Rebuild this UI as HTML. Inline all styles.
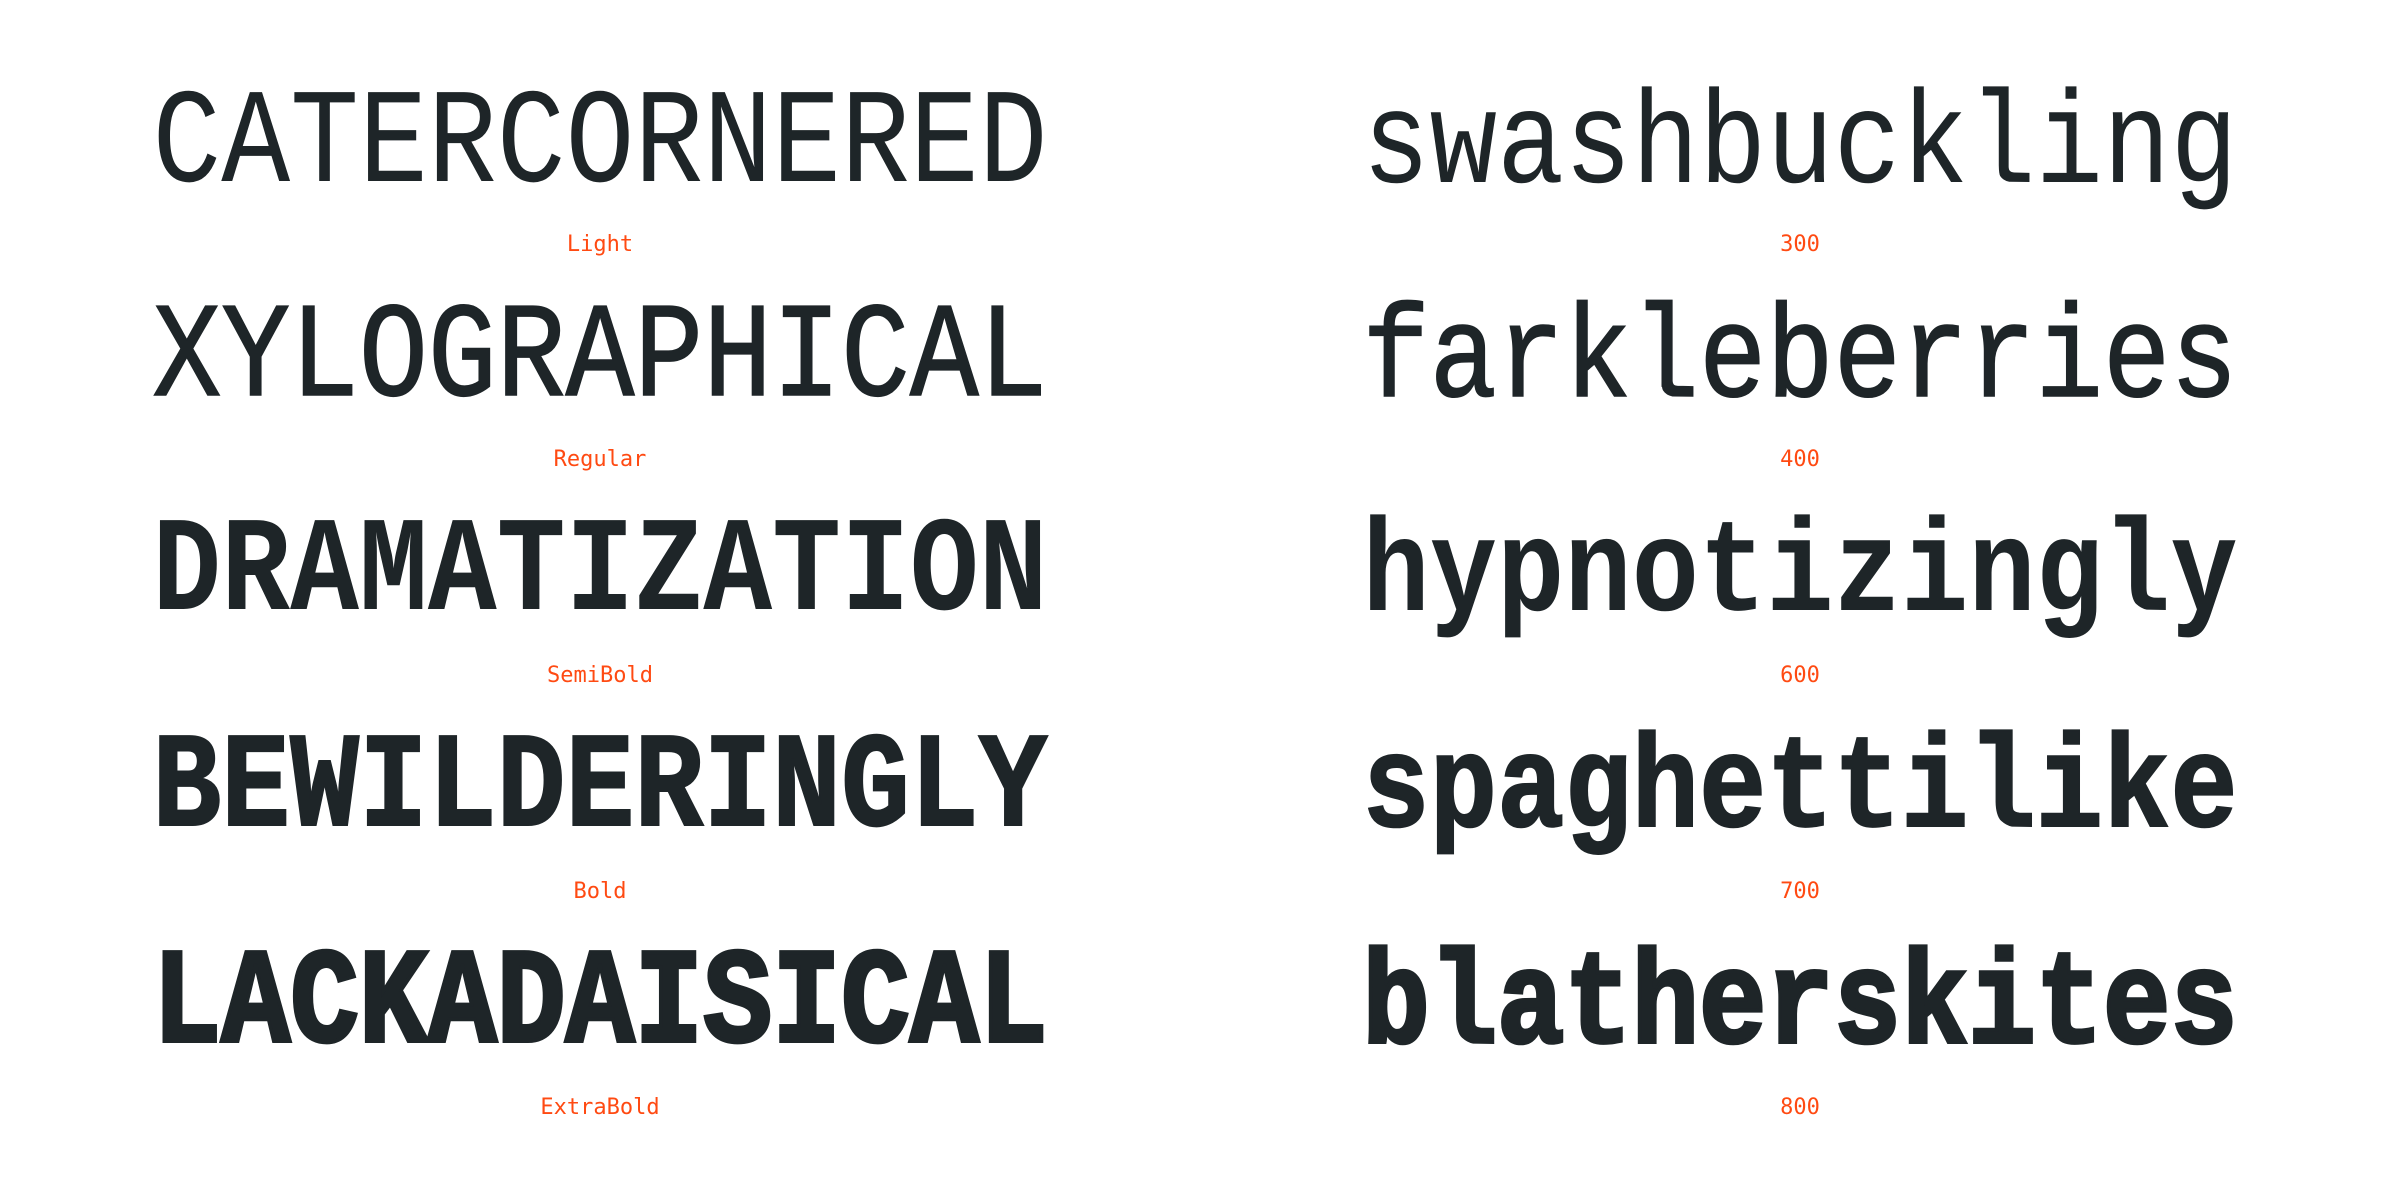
<!DOCTYPE html>
<html><head><meta charset="utf-8"><style>
html,body{margin:0;padding:0;background:#fff;width:2400px;height:1200px;overflow:hidden;position:relative}
.t{position:absolute;width:1200px;text-align:center;font-family:"Liberation Mono",monospace;font-size:135px;line-height:135px;color:#1e2528;white-space:nowrap;transform:scaleX(0.85);transform-origin:center}
.c2.t{font-size:132px;transform:scaleX(0.85)}
.l{position:absolute;width:1200px;text-align:center;font-family:"DejaVu Sans Mono","Liberation Mono",monospace;font-size:22px;line-height:22px;color:#ff4a12;white-space:nowrap}
.c1{left:0}.c2{left:1200px}
.w3{font-weight:400;-webkit-text-stroke:0}
.w4{font-weight:400;-webkit-text-stroke:1.5px #1e2528}
.w6{font-weight:700}
.w7{font-weight:700;-webkit-text-stroke:2px #1e2528}
.w8{font-weight:700;-webkit-text-stroke:4px #1e2528}
</style></head><body>
<div class="t c1 w3" style="top:78px">CATERCORNERED</div>
<div class="t c2 w3" style="top:80px">swashbuckling</div>
<div class="l c1" style="top:234px">Light</div>
<div class="l c2" style="top:234px">300</div>

<div class="t c1 w4" style="top:292px">XYLOGRAPHICAL</div>
<div class="t c2 w4" style="top:294px">farkleberries</div>
<div class="l c1" style="top:449px">Regular</div>
<div class="l c2" style="top:449px">400</div>

<div class="t c1 w6" style="top:506px">DRAMATIZATION</div>
<div class="t c2 w6" style="top:508px">hypnotizingly</div>
<div class="l c1" style="top:665px">SemiBold</div>
<div class="l c2" style="top:665px">600</div>

<div class="t c1 w7" style="top:722px">BEWILDERINGLY</div>
<div class="t c2 w7" style="top:724px">spaghettilike</div>
<div class="l c1" style="top:881px">Bold</div>
<div class="l c2" style="top:881px">700</div>

<div class="t c1 w8" style="top:938px">LACKADAISICAL</div>
<div class="t c2 w8" style="top:940px">blatherskites</div>
<div class="l c1" style="top:1097px">ExtraBold</div>
<div class="l c2" style="top:1097px">800</div>
</body></html>
